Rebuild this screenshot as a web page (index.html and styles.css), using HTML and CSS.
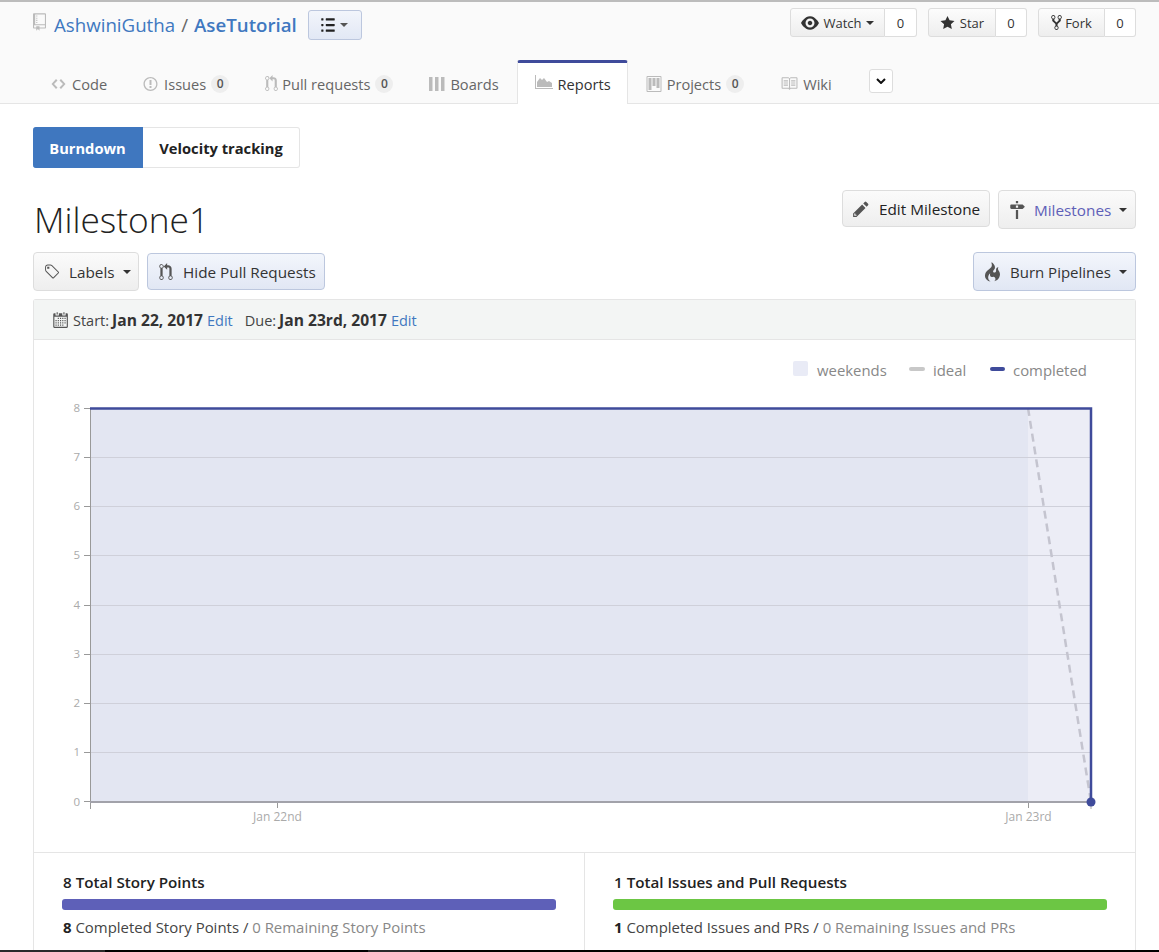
FILE: index.html
```html
<!DOCTYPE html>
<html lang="en">
<head>
<meta charset="utf-8">
<title>AseTutorial - Reports</title>
<link rel="stylesheet" href="styles.css">
</head>
<body>
<header class="repohead">
  <div class="titlebar">
    <div class="repo">
      <svg class="repo-icon" viewBox="0 0 12 16"><path d="M4 9H3V8h1v1zm0-3H3v1h1V6zm0-2H3v1h1V4zm0-2H3v1h1V2zm8-1v12c0 .55-.45 1-1 1H6v2l-1.500-1.500L3 16v-2H1c-.55 0-1-.45-1-1V1c0-.55.45-1 1-1h10c.55 0 1 .45 1 1zm-1 10H1v2h2v-1h3v1h5v-2zm0-10H2v9h9V1z"/></svg>
      <a class="owner">AshwiniGutha</a><span class="slash">/</span><a class="reponame">AseTutorial</a>
      <button class="btn-list"><svg class="list-icon" viewBox="0 0 12 16"><path d="M2 13c0 .59 0 1-.59 1H.59C0 14 0 13.590 0 13c0-.59 0-1 .59-1h.81c.59 0 .59.41.59 1H2zm2.590-9h6.810c.59 0 .59-.41.59-1 0-.59 0-1-.59-1H4.590C4 2 4 2.410 4 3c0 .59 0 1 .59 1zM1.410 7H.59C0 7 0 7.410 0 8c0 .59 0 1 .59 1h.81c.59 0 .59-.41.59-1 0-.59 0-1-.59-1h.01zm0-5H.59C0 2 0 2.410 0 3c0 .59 0 1 .59 1h.81c.59 0 .59-.41.59-1 0-.59 0-1-.59-1h.01zm10 5H4.590C4 7 4 7.410 4 8c0 .59 0 1 .59 1h6.810c.59 0 .59-.41.59-1 0-.59 0-1-.59-1h.01zm0 5H4.590C4 12 4 12.410 4 13c0 .59 0 1 .59 1h6.810c.59 0 .59-.41.59-1 0-.59 0-1-.59-1h.01z"/></svg><i class="caret"></i></button>
    </div>
    <div class="actions">
      <div class="social"><span class="social-btn watch"><svg class="ic-eye" viewBox="0 0 16 16"><path d="M8.060 2C3 2 0 8 0 8s3 6 8.060 6C13 14 16 8 16 8s-3-6-7.940-6zM8 12c-2.200 0-4-1.780-4-4 0-2.200 1.800-4 4-4 2.220 0 4 1.800 4 4 0 2.220-1.780 4-4 4zm2-4c0 1.110-.89 2-2 2-1.110 0-2-.89-2-2 0-1.110.89-2 2-2 1.110 0 2 .89 2 2z"/></svg>Watch<i class="caret"></i></span><span class="count wide-count">0</span></div>
      <div class="social"><span class="social-btn star"><svg class="ic-star" viewBox="0 0 14 16"><path d="M14 6l-4.900-.64L7 1 4.900 5.360 0 6l3.600 3.260L2.670 14 7 11.670 11.330 14l-.93-4.740L14 6z"/></svg>Star</span><span class="count">0</span></div>
      <div class="social"><span class="social-btn fork"><svg class="ic-fork" viewBox="0 0 10 16"><path d="M8 1a1.993 1.993 0 0 0-1 3.720V6L5 8 3 6V4.720A1.993 1.993 0 0 0 2 1a1.993 1.993 0 0 0-1 3.720V6.500l3 3v1.780A1.993 1.993 0 0 0 5 15a1.993 1.993 0 0 0 1-3.720V9.500l3-3V4.720A1.993 1.993 0 0 0 8 1zM2 4.200C1.340 4.200.8 3.650.8 3c0-.65.55-1.200 1.200-1.200.65 0 1.200.55 1.200 1.200 0 .65-.55 1.200-1.200 1.200zm3 10c-.66 0-1.200-.55-1.200-1.200 0-.65.55-1.200 1.200-1.200.65 0 1.200.55 1.200 1.200 0 .65-.55 1.200-1.200 1.200zm3-10c-.66 0-1.200-.55-1.200-1.200 0-.65.55-1.200 1.200-1.200.65 0 1.200.55 1.200 1.200 0 .65-.55 1.200-1.200 1.200z"/></svg>Fork</span><span class="count">0</span></div>
    </div>
  </div>
  <nav class="tabs">
    <a class="tab"><svg class="tab-ic" viewBox="0 0 14 16"><path d="M9.500 3L8 4.500 11.500 8 8 11.500 9.500 13 14 8 9.500 3zm-5 0L0 8l4.500 5L6 11.500 2.500 8 6 4.500 4.500 3z"/></svg>Code</a>
    <a class="tab"><svg class="tab-ic" viewBox="0 0 14 16"><path d="M7 2.300c3.140 0 5.700 2.560 5.700 5.700s-2.560 5.700-5.700 5.700A5.710 5.710 0 0 1 1.300 8c0-3.140 2.560-5.700 5.700-5.700zM7 1C3.140 1 0 4.140 0 8s3.140 7 7 7 7-3.140 7-7-3.140-7-7-7zm1 3H6v5h2V4zm0 6H6v2h2v-2z"/></svg>Issues<span class="badge">0</span></a>
    <a class="tab"><svg class="tab-ic ic12" viewBox="0 0 12 16"><path d="M11 11.280V5c-.03-.78-.34-1.470-.94-2.060C9.460 2.350 8.780 2.030 8 2H7V0L4 3l3 3V4h1c.27.02.48.11.69.31.21.2.3.42.31.69v6.280A1.993 1.993 0 0 0 10 15a1.993 1.993 0 0 0 1-3.720zm-1 2.920c-.66 0-1.200-.55-1.200-1.200 0-.65.55-1.200 1.200-1.200.65 0 1.200.55 1.200 1.200 0 .65-.55 1.200-1.200 1.200zM4 3c0-1.110-.89-2-2-2a1.993 1.993 0 0 0-1 3.720v6.560A1.993 1.993 0 0 0 2 15a1.993 1.993 0 0 0 1-3.720V4.720c.59-.34 1-.98 1-1.720zm-.8 10c0 .66-.55 1.200-1.200 1.200-.65 0-1.200-.55-1.200-1.200 0-.65.55-1.200 1.200-1.200.65 0 1.200.55 1.200 1.200zM2 4.200C1.340 4.200.8 3.650.8 3c0-.65.55-1.200 1.200-1.200.65 0 1.200.55 1.200 1.200 0 .65-.55 1.200-1.200 1.200z"/></svg>Pull requests<span class="badge">0</span></a>
    <a class="tab"><svg class="tab-ic ic16" viewBox="0 0 16 16"><path d="M0 1h3.500v14H0zM6 1h3.500v14H6zM12 1h3.500v14H12z"/></svg>Boards</a>
    <a class="tab active"><svg class="tab-ic ic18" viewBox="0 0 18 14"><path d="M0 0h1v13h17v1H0z"/><path d="M2 12V7l3-4 2 2 2-2 3 4 2-1 3 2v4z"/></svg>Reports</a>
    <a class="tab"><svg class="tab-ic ic16" viewBox="0 0 15 16"><path d="M10 12h3V2h-3v10zm-4-2h3V2H6v8zm-4 4h3V2H2v12zm-1 1h13V1H1v14zM14 0H1a1 1 0 0 0-1 1v14a1 1 0 0 0 1 1h13a1 1 0 0 0 1-1V1a1 1 0 0 0-1-1z"/></svg>Projects<span class="badge">0</span></a>
    <a class="tab"><svg class="tab-ic book" viewBox="0 0 16 16"><path d="M3 5h4v1H3V5zm0 3h4V7H3v1zm0 2h4V9H3v1zm11-5h-4v1h4V5zm0 2h-4v1h4V7zm0 2h-4v1h4V9zm2-6v9c0 .55-.45 1-1 1H9.500l-1 1-1-1H2c-.55 0-1-.45-1-1V3c0-.55.45-1 1-1h5.500l1 1 1-1H15c.55 0 1 .45 1 1zm-8 .5L7.500 3H2v9h6V3.500zm7-.5H9.500l-.5.5V12h6V3z"/></svg>Wiki</a>
    <button class="more"><svg class="chev" viewBox="0 0 10 6"><path d="M1 1l4 4 4-4" /></svg></button>
  </nav>
</header>
<main class="content">
  <div class="switch"><a class="switch-item on">Burndown</a><a class="switch-item">Velocity tracking</a></div>
  <div class="heading-row">
    <h1 class="title">Milestone1</h1>
    <div class="heading-actions">
      <button class="btn btn-edit"><svg class="btn-ic" viewBox="0 0 14 16"><path d="M0 12v3h3l8-8-3-3-8 8zm3 2H1v-2h1v1h1v1zm10.300-9.300L12 6 9 3l1.300-1.300a.996.996 0 0 1 1.410 0l1.590 1.590c.39.39.39 1.020 0 1.410z"/></svg>Edit Milestone</button>
      <button class="btn btn-ms"><svg class="btn-ic" viewBox="0 0 14 16"><path d="M8 2H6V0h2v2zm4 5H2c-.55 0-1-.45-1-1V4c0-.55.45-1 1-1h10l2 2-2 2zM8 4H6v2h2V4zM6 16h2V8H6v8z"/></svg><span class="ms-text">Milestones</span><i class="caret wide"></i></button>
    </div>
  </div>
  <div class="filter-row">
    <div class="filter-left">
      <button class="btn btn-labels"><svg class="btn-ic" viewBox="0 0 15 16"><path d="M7.730 1.730C7.260 1.260 6.620 1 5.960 1H3.500C2.130 1 1 2.130 1 3.500v2.470c0 .66.27 1.300.73 1.770l6.060 6.060c.39.39 1.020.39 1.410 0l4.590-4.590a.996.996 0 0 0 0-1.410L7.730 1.730zM2.380 7.090c-.31-.3-.47-.7-.47-1.130V3.500c0-.88.72-1.590 1.590-1.590h2.470c.42 0 .83.16 1.130.47l6.140 6.130-4.730 4.730-6.130-6.150zM3.010 3h2v2H3V3h.01z"/></svg>Labels<i class="caret wide"></i></button>
      <button class="btn blue btn-hide"><svg class="btn-ic" viewBox="0 0 12 16"><path d="M11 11.280V5c-.03-.78-.34-1.470-.94-2.060C9.460 2.350 8.780 2.030 8 2H7V0L4 3l3 3V4h1c.27.02.48.11.69.31.21.2.3.42.31.69v6.280A1.993 1.993 0 0 0 10 15a1.993 1.993 0 0 0 1-3.720zm-1 2.920c-.66 0-1.200-.55-1.200-1.200 0-.65.55-1.200 1.200-1.200.65 0 1.200.55 1.200 1.200 0 .65-.55 1.200-1.200 1.200zM4 3c0-1.110-.89-2-2-2a1.993 1.993 0 0 0-1 3.720v6.560A1.993 1.993 0 0 0 2 15a1.993 1.993 0 0 0 1-3.720V4.720c.59-.34 1-.98 1-1.720zm-.8 10c0 .66-.55 1.200-1.200 1.200-.65 0-1.200-.55-1.200-1.200 0-.65.55-1.200 1.200-1.200.65 0 1.200.55 1.200 1.200zM2 4.200C1.340 4.200.8 3.650.8 3c0-.65.55-1.200 1.200-1.200.65 0 1.200.55 1.200 1.200 0 .65-.55 1.200-1.200 1.200z"/></svg>Hide Pull Requests</button>
    </div>
    <button class="btn blue btn-burn"><svg class="btn-ic flame" viewBox="0 0 12 16"><path d="M5.050.31c.81 2.170.41 3.380-.52 4.310C3.550 5.670 1.980 6.450.9 7.980c-1.450 2.050-1.700 6.530 3.530 7.700-2.200-1.160-2.670-4.520-.3-6.610-.61 2.030.53 3.330 1.940 2.860 1.390-.47 2.300.53 2.270 1.670-.02.78-.31 1.440-1.130 1.810 3.420-.59 4.780-3.420 4.780-5.560 0-2.840-2.530-3.220-1.250-5.610-1.520.13-2.030 1.130-1.890 2.750.09 1.080-1.020 1.800-1.860 1.330-.67-.41-.66-1.190-.06-1.780C8.180 5.310 8.680 3.450 6.200.75 5.970.49 5.780.31 5.050.31z"/></svg>Burn Pipelines<i class="caret wide"></i></button>
  </div>
  <section class="panel">
    <div class="panel-head">
      <svg class="cal" viewBox="0 0 14 16"><path d="M13 2h-1v1.500c0 .28-.22.5-.5.5h-2c-.28 0-.5-.22-.5-.5V2H6v1.500c0 .28-.22.5-.5.5h-2c-.28 0-.5-.22-.5-.5V2H2c-.55 0-1 .45-1 1v11c0 .55.45 1 1 1h11c.55 0 1-.45 1-1V3c0-.55-.45-1-1-1zm0 12H2V5h11v9zM5 3H4V1h1v2zm6 0h-1V1h1v2zM6 7H5V6h1v1zm2 0H7V6h1v1zm2 0H9V6h1v1zm2 0h-1V6h1v1zM4 9H3V8h1v1zm2 0H5V8h1v1zm2 0H7V8h1v1zm2 0H9V8h1v1zm2 0h-1V8h1v1zm-8 2H3v-1h1v1zm2 0H5v-1h1v1zm2 0H7v-1h1v1zm2 0H9v-1h1v1zm2 0h-1v-1h1v1zm-8 2H3v-1h1v1zm2 0H5v-1h1v1zm2 0H7v-1h1v1zm2 0H9v-1h1v1z"/></svg>
      <span>Start:</span><b>Jan 22, 2017</b><a class="edit">Edit</a><span class="due">Due:</span><b>Jan 23rd, 2017</b><a class="edit">Edit</a>
    </div>
    <svg class="chart" viewBox="34 340 1101 512">
      <rect class="legend-box" x="793" y="361" width="15" height="15" rx="2"/>
      <text class="legend" x="817" y="376">weekends</text>
      <rect class="legend-ideal" x="909" y="367" width="16" height="4" rx="2"/>
      <text class="legend" x="933" y="376">ideal</text>
      <rect class="legend-done" x="990" y="367" width="15" height="4" rx="2"/>
      <text class="legend" x="1013" y="376">completed</text>
      <rect class="area-main" x="90" y="408" width="938" height="394"/>
      <rect class="area-end" x="1028" y="408" width="63" height="394"/>
      <g class="grid">
        <path d="M90 457.500H1091M90 506.500H1091M90 555.500H1091M90 605.500H1091M90 654.500H1091M90 703.500H1091M90 752.500H1091"/>
      </g>
      <path class="ticks" d="M84 408.500H90M84 457.500H90M84 506.500H90M84 555.500H90M84 605.500H90M84 654.500H90M84 703.500H90M84 752.500H90M84 801.500H90M90.500 408V809M277.500 802V808M1028.500 802V808"/>
      <path class="ideal" d="M1028 408L1091 802"/>
      <path class="axis" d="M90 802H1091"/>
      <path class="done" d="M90 408.500H1091V802"/>
      <path class="tick-dot" d="M1091 806V809"/>
      <circle class="dot" cx="1091" cy="802" r="4.500"/>
      <g class="ylab">
        <text x="80" y="412">8</text><text x="80" y="461">7</text><text x="80" y="510">6</text><text x="80" y="559">5</text><text x="80" y="609">4</text><text x="80" y="658">3</text><text x="80" y="707">2</text><text x="80" y="756">1</text><text x="80" y="806">0</text>
      </g>
      <g class="xlab"><text x="277.500" y="821">Jan 22nd</text><text x="1028.500" y="821">Jan 23rd</text></g>
    </svg>
    <div class="stats">
      <div class="stat">
        <div class="stat-title">8 Total Story Points</div>
        <div class="bar purple"></div>
        <div class="stat-line"><b>8</b> Completed Story Points / <span class="muted">0 Remaining Story Points</span></div>
      </div>
      <div class="stat">
        <div class="stat-title">1 Total Issues and Pull Requests</div>
        <div class="bar green"></div>
        <div class="stat-line"><b>1</b> Completed Issues and PRs / <span class="muted">0 Remaining Issues and PRs</span></div>
      </div>
    </div>
  </section>
</main>
<div class="taskbar"></div>
</body>
</html>
```
FILE: styles.css
```css
* { box-sizing: border-box; }
html, body { margin: 0; height: 952px; overflow: hidden; background: #fff; }
body {
  font-family: "Open Sans", "Noto Sans", "Liberation Sans", sans-serif;
  font-size: 14px;
  color: #333;
  display: flex;
  flex-direction: column;
}
button { font-family: inherit; margin: 0; cursor: pointer; white-space: nowrap; }
svg { fill: currentColor; fill-rule: evenodd; flex: none; display: block; }
.caret { display: inline-block; width: 0; height: 0; border: 4px solid transparent; border-top-color: currentColor; border-bottom: 0; margin-left: 4px; }
.caret.wide { margin-left: 8px; }

.repohead { height: 104px; flex: none; background: #fafafa; border-top: 2px solid #bcbcbc; border-bottom: 1px solid #e5e5e5; padding: 6px 23px 0 33px; display: flex; flex-direction: column; }
.titlebar { display: flex; justify-content: space-between; height: 53px; }
.repo { display: flex; align-items: flex-start; font-size: 18.700px; line-height: 30px; padding-top: 2px; }
.repo-icon { width: 13px; height: 18px; margin: 3px 8px 0 0; color: #bbb; }
.owner { color: #4078c0; }
.slash { color: #666; margin: 0 6px; }
.reponame { color: #4078c0; font-weight: 600; }
.btn-list { width: 54px; height: 30px; margin-left: 11px; border: 1px solid #bcc7de; border-radius: 3px; background: linear-gradient(#f2f5fb, #e2e8f5); color: #222; display: flex; align-items: center; justify-content: center; padding: 0; }
.list-icon { width: 14px; height: 18px; }
.btn-list .caret { color: #555; margin-left: 5px; }
.actions { display: flex; gap: 11px; }
.social { display: flex; height: 29px; font-size: 13px; }
.social-btn { display: flex; align-items: center; justify-content: center; padding: 0; border: 1px solid #ddd; border-radius: 3px 0 0 3px; background: linear-gradient(#fcfcfc, #eee); color: #333; }
.watch { width: 95px; }
.star { width: 68px; }
.fork { width: 67px; }
.ic-eye { width: 18px; height: 18px; margin-right: 4px; }
.ic-star { width: 15px; height: 16px; margin-right: 5px; }
.ic-fork { width: 11px; height: 17px; margin-right: 3px; }
.count { display: flex; align-items: center; justify-content: center; width: 31px; background: #fff; border: 1px solid #ddd; border-left: 0; border-radius: 0 3px 3px 0; }
.wide-count { width: 32px; }

.tabs { display: flex; align-items: flex-start; margin-bottom: -1px; flex: 1; }
.tab { display: flex; align-items: center; height: 43px; padding: 4px 18px 0; font-size: 14.600px; color: #666; }
.tab-ic { width: 15px; height: 16px; margin-right: 6px; color: #bbb; }
.tab-ic.ic12 { width: 13px; height: 17px; margin-right: 4px; }
.tab-ic.ic16 { width: 16px; height: 16px; margin-right: 5px; }
.tab-ic.book { width: 18px; height: 17px; margin-right: 5px; }
.tab-ic.ic18 { width: 18px; height: 14px; margin: -5px 5px 0 0; }
.tab.active { background: #fff; color: #333; border: 1px solid #e5e5e5; border-top: 3px solid #3f4b9b; border-bottom: 0; border-radius: 3px 3px 0 0; padding: 1px 16px 0 17px; height: 44px; }
.badge { display: inline-flex; align-items: center; justify-content: center; min-width: 18px; height: 18px; margin-left: 5px; border-radius: 9px; background: #eee; font-size: 12px; font-weight: 600; color: #555; }
.more { width: 24px; height: 24px; margin: 9px 0 0 19px; border: 1px solid #ddd; border-radius: 3px; background: #fff; display: flex; align-items: center; justify-content: center; padding: 0; }
.chev { width: 10px; height: 6px; fill: none; stroke: #111; stroke-width: 2; }

.content { flex: 1; padding: 23px 23px 0 33px; min-height: 0; display: flex; flex-direction: column; }
.switch { display: flex; height: 41px; font-size: 14.700px; font-weight: 700; }
.switch-item { display: flex; align-items: center; justify-content: center; width: 157px; padding-top: 1px; border: 1px solid #e5e5e5; border-left: 0; border-radius: 0 3px 3px 0; color: #222; }
.switch-item.on { width: 110px; background: #3f77bf; color: #fff; border-color: #3f77bf; border-radius: 3px 0 0 3px; }

.heading-row { display: flex; justify-content: space-between; align-items: flex-start; margin-top: 22px; height: 62px; }
.title { margin: 0 0 0 1px; font-size: 35.300px; font-weight: 300; line-height: 58px; color: #222; }
.heading-actions { display: flex; gap: 8px; align-items: flex-start; }
.btn { display: flex; align-items: center; border: 1px solid #ddd; border-radius: 4px; background: linear-gradient(#fbfbfb, #eee); font-size: 15.300px; color: #333; padding: 1px 10px 0; }
.btn.blue { background: linear-gradient(#f3f6fc, #e1e7f4); border-color: #bcc7de; }
.btn-ic { width: 16px; height: 18px; margin-right: 9px; color: #555; }
.flame { width: 17px; height: 20px; }
.btn-edit { height: 37px; width: 148px; color: #222; }
.btn-edit .btn-ic { margin-right: 10px; }
.btn-ms { height: 39px; width: 138px; }
.ms-text { color: #5e60b8; }
.filter-row { display: flex; justify-content: space-between; align-items: flex-start; height: 47px; }
.filter-left { display: flex; gap: 8px; align-items: flex-start; }
.btn-labels { height: 39px; width: 106px; }
.btn-hide { height: 37px; width: 178px; margin-top: 1px; }
.btn-burn { height: 39px; width: 163px; font-size: 15px; }

.panel { flex: 1; min-height: 0; border: 1px solid #e5e5e5; border-bottom: 0; border-radius: 3px 3px 0 0; display: flex; flex-direction: column; }
.panel-head { height: 40px; flex: none; background: #f3f5f4; border-bottom: 1px solid #e5e5e5; display: flex; align-items: center; padding: 1px 0 0 18px; font-size: 14.500px; color: #444; }
.panel-head b { margin-left: 3px; font-size: 15.600px; color: #333; }
.cal { width: 16px; height: 18px; margin-right: 5px; color: #555; }
.edit { color: #4078c0; margin-left: 4px; }
.due { margin-left: 12px; }
.chart { width: 1101px; height: 512px; flex: none; overflow: visible; }
.legend { font-size: 14.900px; fill: #888; }
.legend-box { fill: #e9ebf6; }
.legend-ideal { fill: #c8c8c8; }
.legend-done { fill: #3f4b9b; }
.area-main { fill: #e3e6f2; }
.area-end { fill: #ecedf6; }
.grid path { stroke: #cfd0da; stroke-width: 1; fill: none; }
.ticks { stroke: #999; stroke-width: 1; fill: none; }
.ideal { stroke: #c4c4cf; stroke-width: 2.500; stroke-dasharray: 8 5; fill: none; }
.axis { stroke: #a2a2aa; stroke-width: 2; fill: none; }
.done { stroke: #3f4b9b; stroke-width: 2.500; fill: none; }
.tick-dot { stroke: #aaa; stroke-width: 1; fill: none; }
.dot { fill: #3f4b9b; }
.ylab text { font-size: 11.500px; fill: #aaa; text-anchor: end; }
.xlab text { font-size: 12px; fill: #aaa; text-anchor: middle; }

.stats { flex: 1; display: grid; grid-template-columns: 550px 1fr; border-top: 1px solid #e5e5e5; }
.stat { padding: 19px 28px 0; }
.stat + .stat { border-left: 1px solid #e5e5e5; }
.stat-title { font-size: 15.200px; font-weight: 600; color: #222; line-height: 20px; padding-left: 1px; }
.bar { height: 11px; margin-top: 7px; border-radius: 3px; width: 494px; }
.bar.purple { background: #5e60b8; }
.bar.green { background: #6cc644; }
.stat-line { margin-top: 7px; font-size: 14.950px; line-height: 20px; color: #444; padding-left: 1px; }
.stat-line b { color: #222; }
.muted { color: #888; }
.taskbar { height: 2px; flex: none; background: linear-gradient(90deg, #2a2a2a 105px, #000 105px, #000 368px, #2a2a2a 368px, #2a2a2a 420px, #000 420px); }
```
